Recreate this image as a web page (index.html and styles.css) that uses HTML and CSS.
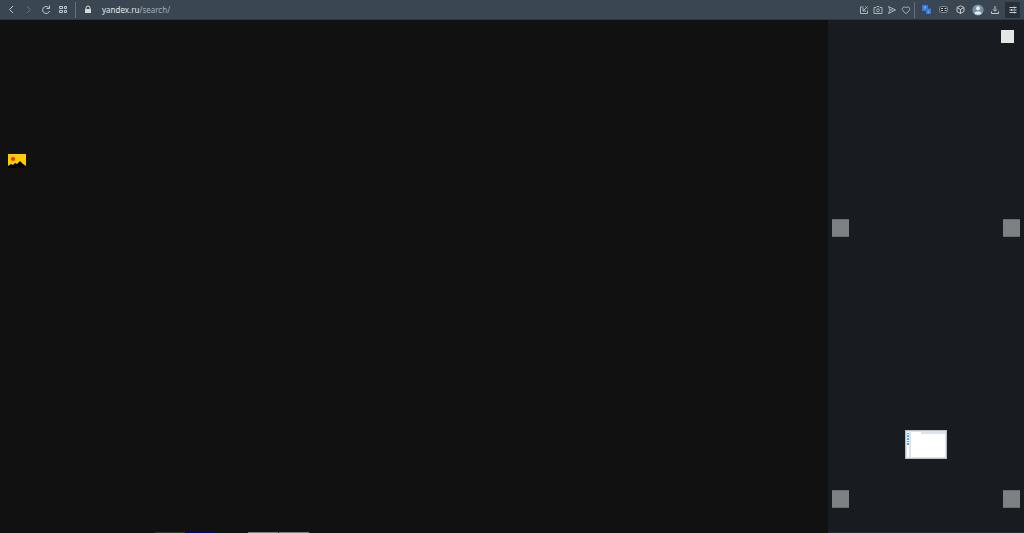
FILE: index.html
```html
<!DOCTYPE html>
<html lang="ru">
<head>
  <meta charset="UTF-8">
  <title>yandex.ru/search/</title>
  <link rel="stylesheet" href="styles.css">
</head>
<body>

	<header class="toolbar">
		<nav class="nav">
			<button class="tool" aria-label="Back"><svg viewBox="0 0 12 12"><path d="M7 2 3.500 5.500 7 9"/></svg></button>
			<button class="tool off" aria-label="Forward"><svg viewBox="0 0 12 12"><path d="M4 2l3.500 3.500L4 9"/></svg></button>
			<button class="tool" aria-label="Reload"><svg viewBox="0 0 12 12"><path d="M9.500 7A3.500 3.500 0 1 1 8.500 3.400M9.500 1.500v3h-3"/></svg></button>
			<button class="tool" aria-label="Speed dial"><svg viewBox="0 0 12 12"><path d="M2.500 2.500h3v2h-3zM7.500 2.500h2v2h-2zM2.500 6.500h3v2h-3zM7.500 6.500h2v2h-2z"/></svg></button>
		</nav>

		<div class="address">
			<svg class="lock" viewBox="0 0 12 12"><path d="M4 6V4a2 2 0 0 1 4 0v2"/><rect x="3.500" y="5.500" width="5" height="3"/></svg>
			<span class="url"><b>yandex.ru</b>/search/</span>
		</div>

		<div class="actions">
			<button class="tool" aria-label="Edit page"><svg viewBox="0 0 12 12"><path d="M5.500 3h-3v6.500h7V6.500M9.500 2.500 5 7M5 4v3h3M7.500 2.500l2 2"/></svg></button>
			<button class="tool" aria-label="Snapshot"><svg viewBox="0 0 12 12"><path d="M2 3.500h2l1-1h2l1 1h2V9.500H2z"/><circle cx="6" cy="6.300" r="1.500"/></svg></button>
			<button class="tool" aria-label="Send"><svg viewBox="0 0 12 12"><path d="M2.500 2.500 9.500 6l-7 3.500L4 6zM4 6h3"/></svg></button>
			<button class="tool" aria-label="Bookmark"><svg viewBox="0 0 12 12"><path d="M6 9.800 3 6.800C.8 4.200 4.300 1.300 6 4c1.700-2.700 5.200.2 3 2.800z"/></svg></button>
		</div>

		<div class="extensions">
			<button class="tool" aria-label="Translate"><svg class="translate" viewBox="0 0 12 12"><rect x="1" y="1" width="6" height="6"/><rect x="5" y="4.500" width="5" height="5.500"/><path d="M2.500 3h3M4 2.500v1M2.700 5.500 5 3.500M6.500 7h2M6.500 8.500h2"/></svg></button>
			<button class="tool" aria-label="Extension"><svg viewBox="0 0 12 12"><rect class="face" x="1.500" y="2.500" width="8" height="6" rx="2"/><path d="M3 4.500h2M6.500 4.500h2M3 6.500h2M6.500 6.500h2"/></svg></button>
			<button class="tool" aria-label="Extensions"><svg viewBox="0 0 12 12"><path d="M5.500 1.800 9 3.500v4L5.500 9.500 2 7.500v-4zM2 3.500l3.500 2L9 3.500M5.500 5.500v4"/></svg></button>
			<button class="tool" aria-label="Profile"><svg class="avatar" viewBox="0 0 12 12"><circle class="disc" cx="6" cy="6" r="5.600"/><circle cx="6" cy="4.200" r="2"/><path d="M2.500 9.500C3 6.500 9 6.500 9.500 9.500 8 11 4 11 2.500 9.500z"/></svg></button>
			<button class="tool" aria-label="Downloads"><svg viewBox="0 0 12 12"><path d="M6 2v5M4 5.300l2 2 2-2M2.500 7.500v2h7v-2"/></svg></button>
			<button class="tool setup" aria-label="Easy setup"><svg viewBox="0 0 12 12"><path d="M2.500 3.500h7M2.500 6h7M2.500 8.500h7M7.500 2.500v2M4.500 5v2M7.500 7.500v2"/></svg></button>
		</div>
	</header>

	<div class="content">
		<main class="page">
			<a class="picture" href="#" aria-label="Images">
				<svg viewBox="0 0 18 14"><path fill="#fc0" d="M0 0h18v14H0z"/><circle cx="5" cy="5" r="2" fill="#f20"/><path fill="#000" d="M0 14v-2l3-2 2 1 2-2 2 1 3-3 3 3 3 2v2z"/></svg>
			</a>
			<div class="strip">
				<span class="dark"></span>
				<span class="blue"></span>
				<span></span>
				<span class="grey"></span>
				<span class="grey"></span>
			</div>
		</main>

		<aside class="panel">
			<button class="close" aria-label="Close"></button>
			<div class="pair upper">
				<button class="arrow" aria-label="Previous"></button>
				<button class="arrow" aria-label="Next"></button>
			</div>
			<div class="theme">
				<svg viewBox="0 0 42 29">
					<path fill="#b5c0c5" d="M0 0h42v29H0z"/>
					<path fill="#dde3ee" d="M1 1h40v27H1z"/>
					<path fill="#fff" d="M2 2h2v25H2zM6 2h10v2h24v23H6z"/>
					<path fill="#45aef5" d="M2 3h2v1H2zM2 5h2v2H2zM2 8h2v2H2zM2 11h2v1H2zM2 13h2v2H2z"/>
				</svg>
			</div>
			<div class="pair">
				<button class="arrow" aria-label="Previous"></button>
				<button class="arrow" aria-label="Next"></button>
			</div>
		</aside>
	</div>

</body>
</html>
```
FILE: styles.css
```css
*{
	box-sizing: border-box;
}
body{
	margin: 0;
	height: 100vh;
	display: flex;
	flex-direction: column;
	background: #111;
	font-family: "Noto Sans", sans-serif;
	font-size: 8px;
}
button{
	padding: 0;
	border: 0;
	background: none;
}
svg{
	display: block;
}

/* toolbar */
.toolbar{
	height: 20px;
	flex: none;
	display: flex;
	align-items: center;
	background: #3a4652;
	border-bottom: 1px solid #2e3841;
}
.nav, .actions, .extensions{
	display: flex;
	align-items: center;
}
.nav{
	padding-left: 3px;
	padding-right: 4px;
}
.nav, .actions{
	height: 16px;
	border-right: 1px solid #65707a;
}
.tool{
	width: 17px;
	height: 16px;
	display: grid;
	place-items: center;
	color: #c3c9ce;
}
.tool svg, .lock{
	width: 12px;
	height: 12px;
	fill: none;
	stroke: currentColor;
	stroke-width: 1;
}
.off{
	color: #65707a;
}
.address{
	flex: 1;
	display: flex;
	align-items: center;
	gap: 8px;
	padding-left: 6px;
	color: #a5adb4;
}
.address .lock{
	color: #d5d9dc;
}
.lock rect{
	fill: currentColor;
}
.url{
	line-height: 12px;
}
.url b{
	font-weight: normal;
	color: #e3e6e8;
}
.actions{
	padding-right: 1px;
}
.actions .tool{
	width: 14px;
	color: #abb3b9;
}
.extensions{
	padding: 0 4px 0 3px;
}
.extensions .setup{
	width: 15px;
	margin-left: 2px;
	background: #273039;
}
.tool .translate{
	fill: #3378e0;
	stroke: none;
}
.translate path{
	stroke: #a7c7f5;
	stroke-width: .6;
}
.tool .face{
	fill: #272c31;
	stroke: #8b8f93;
}
.tool .avatar{
	fill: #e4edf4;
	stroke: none;
}
.avatar .disc{
	fill: #7c91a5;
}

/* content */
.content{
	flex: 1;
	display: flex;
}
.page{
	flex: 1;
	display: flex;
	flex-direction: column;
	justify-content: space-between;
}
.picture{
	width: 18px;
	margin: 134px 0 0 8px;
}
.strip{
	display: flex;
	gap: 1px;
	padding-left: 155px;
}
.strip span{
	width: 30px;
	height: 1px;
}
.strip .dark{
	background: #333;
}
.strip .blue{
	background: #00007a;
}
.strip .grey{
	background: #808080;
}

/* side panel */
.panel{
	width: 196px;
	display: flex;
	flex-direction: column;
	padding: 10px 4px 24px 4px;
	background: #181c20;
	border-bottom: 1px solid #2b2931;
}
.close{
	width: 13px;
	height: 13px;
	margin-right: 6px;
	align-self: flex-end;
	background: #e4e6e5;
}
.pair{
	display: flex;
	justify-content: space-between;
}
.upper{
	margin-top: 176px;
	margin-bottom: auto;
}
.arrow{
	width: 17px;
	height: 18px;
	background: #7d8183;
	border: 1px solid #686c6f;
	border-width: 1px 0;
}
.theme{
	width: 42px;
	margin-bottom: 31px;
	align-self: center;
}
```
